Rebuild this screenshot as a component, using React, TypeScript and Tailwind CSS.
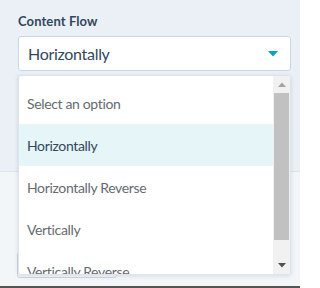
import React from "react";

const options = [
  "Select an option",
  "Horizontally",
  "Horizontally Reverse",
  "Vertically",
  "Vertically Reverse",
];

export default function App() {
  return (
    <div
      className="relative w-[300px] h-[288px] overflow-hidden flex flex-col"
      style={{ fontFamily: "Lato, 'Open Sans', sans-serif" }}
    >
      <div className="h-[171px] bg-[#eaf0f6] px-[18px] pt-[13px] shrink-0">
        <div className="text-[13px] leading-4 font-bold text-[#33475b] tracking-[0.1px]">Content Flow</div>
        <div className="mt-[7px] h-[35px] w-[273px] bg-white border border-[#cbd6e2] rounded-[3px] flex items-center justify-between pl-[9px] pr-[12px]">
          <span className="text-[16px] text-[#33475b] tracking-[-0.3px]">Horizontally</span>
          <svg width="10" height="6" viewBox="0 0 10 6">
            <path d="M0 0 H10 L5 5.5 Z" fill="#00a4bd" />
          </svg>
        </div>
      </div>
      <div className="flex-1 bg-[#f3f6f9] border-t border-[#dfe3eb] relative">
        <div className="ml-[17px] mt-[80px] h-[26px] w-[100px] border border-[#cbd6e2] rounded-[3px] bg-[#f5f8fa]" />
      </div>
      <div className="h-[2px] bg-[#555] shrink-0" />

      <div className="absolute left-[18px] top-[75px] w-[273px] h-[200px] bg-white border border-[#dfe3eb] rounded-[3px] shadow-[0_1px_4px_rgba(45,62,80,0.15)] flex overflow-hidden">
        <div className="flex-1 pt-[6px]">
          {options.map((o, i) => (
            <div
              key={o}
              className={`h-[42px] flex items-center pl-[8px] text-[14px] tracking-[-0.35px] ${
                i === 1 ? "bg-[#e5f5f8] text-[#33475b]" : "text-[#666b70]"
              }`}
            >
              {o}
            </div>
          ))}
        </div>
        <div className="w-[17px] bg-[#f1f1f1] flex flex-col items-center shrink-0">
          <div className="h-[17px] flex items-center justify-center">
            <svg width="8" height="5" viewBox="0 0 8 5">
              <path d="M0 5 L4 0.5 L8 5 Z" fill="#a3a3a3" />
            </svg>
          </div>
          <div className="w-[15px] h-[147px] bg-[#c1c1c1]" />
          <div className="flex-1" />
          <div className="h-[17px] flex items-center justify-center">
            <svg width="8" height="5" viewBox="0 0 8 5">
              <path d="M0 0 L8 0 L4 4.5 Z" fill="#505050" />
            </svg>
          </div>
        </div>
      </div>
    </div>
  );
}
